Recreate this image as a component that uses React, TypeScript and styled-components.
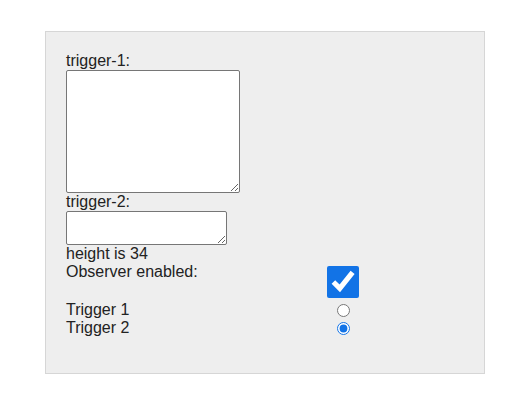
import * as React from "react";
import styled, { createGlobalStyle } from "styled-components";

const Global = createGlobalStyle`
  html, body {
    margin: 0;
    background: #ffffff;
  }
  body {
    padding: 31px 0 0 45px;
    font-family: "Liberation Sans", Arial, sans-serif;
    font-size: 16px;
    color: #222222;
  }
`;

const Panel = styled.div`
  box-sizing: border-box;
  width: 440px;
  height: 343px;
  padding: 20px 20px 0 20px;
  background: #eeeeee;
  border: 1px solid #d6d6d6;
`;

const Label = styled.div`
  line-height: 18px;
`;

const Area = styled.textarea<{ $w: number; $h: number }>`
  display: block;
  box-sizing: border-box;
  width: ${(p) => p.$w}px;
  height: ${(p) => p.$h}px;
  margin: 0;
  border: 1px solid #767676;
  border-radius: 2px;
  background: #ffffff;
  font: inherit;
`;

const Options = styled.div`
  display: grid;
  grid-template-columns: 261px 32px;
  align-items: center;
`;

const RowLabel = styled.div<{ $top?: boolean }>`
  line-height: 18px;
  align-self: ${(p) => (p.$top ? "start" : "center")};
`;

const Check = styled.input`
  width: 32px;
  height: 32px;
  margin: 3px 0;
  accent-color: #1273e6;
`;

const Radio = styled.input`
  justify-self: center;
  width: 13px;
  height: 13px;
  margin: 1px 0 0 0;
  accent-color: #1273e6;
`;

export default function App() {
  const [observe, setObserve] = React.useState(true);
  const [trigger, setTrigger] = React.useState("2");
  return (
    <>
      <Global />
      <Panel>
        <Label>trigger-1:</Label>
        <Area $w={174} $h={123} />
        <Label>trigger-2:</Label>
        <Area $w={161} $h={34} />
        <Label>height is 34</Label>
        <Options>
          <RowLabel $top>Observer enabled:</RowLabel>
          <Check
            type="checkbox"
            checked={observe}
            onChange={(e) => setObserve(e.target.checked)}
          />
          <RowLabel>Trigger 1</RowLabel>
          <Radio
            type="radio"
            name="trigger"
            checked={trigger === "1"}
            onChange={() => setTrigger("1")}
          />
          <RowLabel>Trigger 2</RowLabel>
          <Radio
            type="radio"
            name="trigger"
            checked={trigger === "2"}
            onChange={() => setTrigger("2")}
          />
        </Options>
      </Panel>
    </>
  );
}
